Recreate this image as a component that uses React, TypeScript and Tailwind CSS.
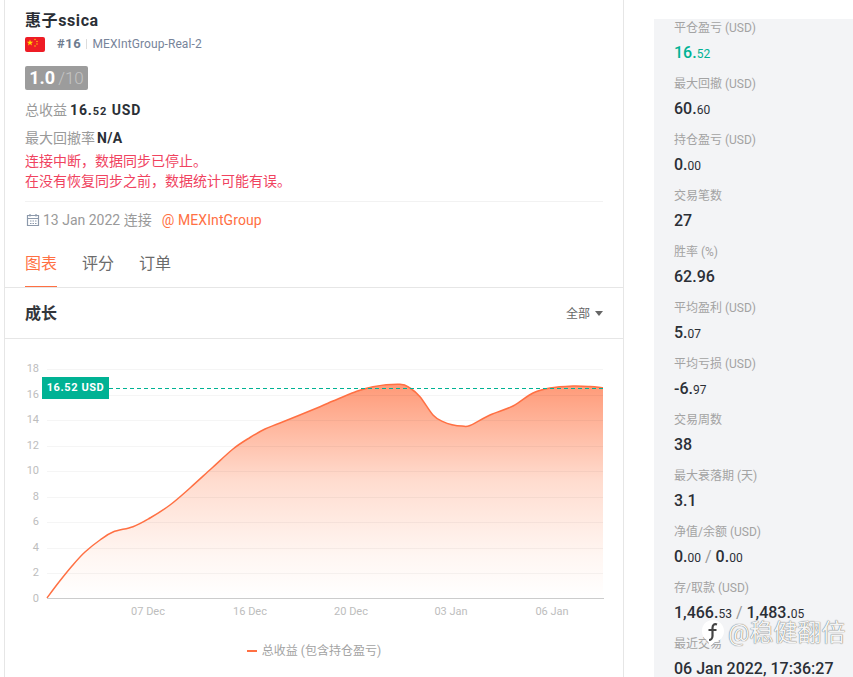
import React from "react";

const pts: [number, number][] = [
  [47,598],[59,582],[72,566],[85,552],[100,540],[113,532],[133,526.7],[150,518],[170,505],[190,488],[212,468],[233,449],[250,437.5],[265,429],[280,423],[320,406.7],[333,401],[355,392],[373,386.7],[400,384.3],[410,388],[420,396.7],[433,415],[443,421.7],[452,424.7],[462,426],[470,425.5],[490,415],[513,406],[533,393],[550,388],[573,386],[590,386.5],[603,387.7],
];
function curve(p: [number, number][]) {
  let d = `M${p[0][0]} ${p[0][1]}`;
  for (let i = 0; i < p.length - 1; i++) {
    const a = p[Math.max(i - 1, 0)], b = p[i], c = p[i + 1], e = p[Math.min(i + 2, p.length - 1)];
    d += ` C${(b[0] + (c[0] - a[0]) / 6).toFixed(1)} ${(b[1] + (c[1] - a[1]) / 6).toFixed(1)} ${(c[0] - (e[0] - b[0]) / 6).toFixed(1)} ${(c[1] - (e[1] - b[1]) / 6).toFixed(1)} ${c[0]} ${c[1]}`;
  }
  return d;
}
const line = curve(pts);
const TOP = 339;
const CJK = "font-['Roboto','Noto_Sans_CJK_SC',sans-serif]";

function Num({ i, d, green }: { i: string; d?: string; green?: boolean }) {
  return (
    <span className={green ? "text-[#00b294]" : "text-[#2b2f36]"}>
      <span className="text-[16px] font-medium">{i}</span>
      {d && <span className="text-[12px] font-normal">{d}</span>}
    </span>
  );
}

function Stat({ label, children }: { label: string; children: React.ReactNode }) {
  return (
    <div className="h-[56px] flex flex-col">
      <div className="h-[18px] leading-[18px] text-[12px] text-[#a3a3a3]">{label}</div>
      <div className="mt-[4px] h-[24px] leading-[24px] whitespace-nowrap">{children}</div>
    </div>
  );
}

export default function App() {
  return (
    <div className={`relative flex w-[853px] h-[677px] overflow-hidden bg-white ${CJK}`}>
      <div className="ml-[4px] w-[620px] h-[677px] shrink-0 border-x border-[#e6e6e6] flex flex-col">
        <div className="px-[20px] pt-[9px]">
          <div className="h-[24px] leading-[24px] text-[16px] font-bold tracking-[0.6px] text-[#2b2f36]">惠子ssica</div>
          <div className="mt-[2px] h-[18px] flex items-center">
            <svg width="20" height="15" viewBox="0 0 20 15" className="shrink-0">
              <rect width="20" height="15" rx="2" fill="#ee1c25" />
              <path d="M5 2.5l.8 2.3h2.4l-1.9 1.4.7 2.3L5 7.1 3 8.5l.7-2.3-1.9-1.4h2.4z" fill="#ffde00" />
              <circle cx="10" cy="2.5" r=".7" fill="#ffde00" />
              <circle cx="12" cy="4.5" r=".7" fill="#ffde00" />
              <circle cx="12" cy="7" r=".7" fill="#ffde00" />
              <circle cx="10" cy="9" r=".7" fill="#ffde00" />
            </svg>
            <span className="ml-[12px] text-[13px] font-bold tracking-[0.6px] text-[#6f7c8f]">#16</span>
            <span className="mx-[5px] w-px h-[10px] bg-[#dcdcdc]" />
            <span className="text-[12px] tracking-[0.1px] text-[#77849a]">MEXIntGroup-Real-2</span>
          </div>
          <div className="mt-[13px] w-[63px] h-[24px] rounded-[2px] bg-[#9c9c9c] flex items-baseline justify-center leading-[24px]">
            <span className="text-[18px] font-bold text-white">1.0</span>
            <span className="ml-[3px] text-[17px] font-light text-[#c4c4c4]">/10</span>
          </div>
          <div className="mt-[8px] h-[24px] leading-[24px] text-[14px] text-[#9a9a9a] whitespace-nowrap">
            总收益<span className="ml-[3px] font-bold text-[#2b2f36] tracking-[0.9px]">16.<span className="text-[11px]">52</span> USD</span>
          </div>
          <div className="mt-[4px] h-[24px] leading-[24px] text-[14px] text-[#9a9a9a] whitespace-nowrap">
            最大回撤率<span className="ml-[2px] font-bold text-[#2b2f36] tracking-[0.4px]">N/A</span>
          </div>
          <div className="mt-[1px] text-[14px] leading-[20px] text-[#f0435f] whitespace-nowrap">
            <div>连接中断，数据同步已停止。</div>
            <div>在没有恢复同步之前，数据统计可能有误。</div>
          </div>
          <div className="mt-[10px] h-px bg-[#f2f2f2]" />
          <div className="mt-[8px] h-[20px] flex items-center text-[14px] whitespace-nowrap">
            <svg width="14" height="14" viewBox="0 0 14 14" className="ml-[1px] shrink-0 text-[#8c99ab]">
              <path d="M1.500 2.500h11v10h-11zM1.500 5.500h11M4 1v2.500M10 1v2.500M4 8h1.500M6.500 8H8M9 8h1.500M4 10.500h1.500M6.500 10.500H8M9 10.500h1.500" fill="none" stroke="currentColor" strokeWidth="1.200" />
            </svg>
            <span className="ml-[3px] text-[#9a9a9a]">13 Jan 2022 连接</span>
            <span className="ml-[10px] tracking-[0.1px] text-[#ff7043]">@ MEXIntGroup</span>
          </div>
          <div className="mt-[22px] flex gap-[25px] text-[16px] text-[#6b6b6b]">
            <div className="h-[36px] leading-[24px] text-[#ff7043] border-b-2 border-[#ff7043]">图表</div>
            <div className="h-[36px] leading-[24px]">评分</div>
            <div className="h-[36px] leading-[24px]">订单</div>
          </div>
        </div>
        <div className="h-px bg-[#e6e6e6] -mt-px" />
        <div className="h-[51px] pt-[1px] px-[20px] flex items-center justify-between border-b border-[#e6e6e6]">
          <span className="text-[16px] font-bold text-[#33363b]">成长</span>
          <span className="flex items-center text-[12px] text-[#666]">
            全部
            <span className="ml-[5px] w-0 h-0 border-x-[4px] border-x-transparent border-t-[5px] border-t-[#666]" />
          </span>
        </div>
        <div className="relative flex-1">
          <svg width="619" height="290" viewBox={`5 ${TOP} 619 290`} className="block">
            <defs>
              <linearGradient id="g" gradientUnits="userSpaceOnUse" x1="0" y1="385" x2="0" y2="598">
                <stop offset="0" stopColor="#ff9a78" />
                <stop offset="0.45" stopColor="#ffdccf" />
                <stop offset="0.8" stopColor="#fff6f2" />
                <stop offset="1" stopColor="#ffffff" />
              </linearGradient>
            </defs>
            <path d={`${line} L603 598 L47 598 Z`} fill="url(#g)" />
            {[18,16,14,12,10,8,6,4,2].map((n) => {
              const y = Math.round(599 - (n * 230) / 18) + 0.5;
              return <line key={n} x1="47" x2="603" y1={y} y2={y} stroke="#000000" strokeOpacity="0.04" />;
            })}
            <path d={line} fill="none" stroke="#ff7043" strokeWidth="1.500" />
            <line x1="47" x2="604" y1="598.500" y2="598.500" stroke="#cccccc" />
            <line x1="109" x2="603" y1="388.500" y2="388.500" stroke="#00b294" strokeWidth="1" strokeDasharray="4 3" shapeRendering="crispEdges" />
            {[18,16,14,12,10,8,6,4,2,0].map((n) => (
              <text key={n} x="39" y={602 - (n * 230) / 18} textAnchor="end" fontSize="11" fill="#bdbdbd" fontFamily="Roboto">{n}</text>
            ))}
            {[["07 Dec",148],["16 Dec",250],["20 Dec",351],["03 Jan",451],["06 Jan",552]].map(([t,x]) => (
              <text key={t as string} x={x as number} y="615" textAnchor="middle" fontSize="11" fill="#bdbdbd" fontFamily="Roboto">{t}</text>
            ))}
          </svg>
          <div className="absolute left-[37px] top-[38px] w-[67px] h-[22px] bg-[#00b294] text-white text-[11px] font-bold tracking-[0.6px] leading-[22px] text-center">16.52 USD</div>
          <div className="absolute left-0 right-0 top-[303px] flex items-center justify-center text-[12px] leading-[18px] text-[#a3a3a3]">
            <span className="mr-[5px] w-[10px] h-[2px] bg-[#ff7043]" />
            总收益 (包含持仓盈亏)
          </div>
        </div>
      </div>
      <div className="ml-[30px] mt-[19px] flex-1 bg-[#f3f4f6] pl-[20px]">
        <Stat label="平仓盈亏 (USD)"><Num i="16." d="52" green /></Stat>
        <Stat label="最大回撤 (USD)"><Num i="60." d="60" /></Stat>
        <Stat label="持仓盈亏 (USD)"><Num i="0." d="00" /></Stat>
        <Stat label="交易笔数"><Num i="27" /></Stat>
        <Stat label="胜率 (%)"><Num i="62.96" /></Stat>
        <Stat label="平均盈利 (USD)"><Num i="5." d="07" /></Stat>
        <Stat label="平均亏损 (USD)"><Num i="-6." d="97" /></Stat>
        <Stat label="交易周数"><Num i="38" /></Stat>
        <Stat label="最大衰落期 (天)"><Num i="3.1" /></Stat>
        <Stat label="净值/余额 (USD)"><Num i="0." d="00" /> <span className="text-[16px] text-[#999]">/</span> <Num i="0." d="00" /></Stat>
        <Stat label="存/取款 (USD)"><Num i="1,466." d="53" /> <span className="text-[16px] text-[#999]">/</span> <Num i="1,483." d="05" /></Stat>
        <Stat label="最近交易"><Num i="06 Jan 2022, 17:36:27" /></Stat>
      </div>
      <div className="absolute left-[701px] top-[618px] flex items-center h-[30px]">
        <svg width="24" height="28" viewBox="0 0 24 28" className="shrink-0">
          <path d="M12 1C5 1 1 6 1 12c0 5 3 8 6 10l2 5 5-4c5-1 9-5 9-11C23 6 18 1 12 1z" fill="#ffffff" />
          <path d="M16 5.500c-2.500-1-4.500 0-4.500 3.500v8c0 2-1.500 4-3.500 4M7.500 11h8" fill="none" stroke="#444444" strokeWidth="2.200" />
        </svg>
        <span className="ml-[3px] text-[24px] leading-[30px] text-[#f4f4f4] whitespace-nowrap [text-shadow:0_0_1px_#333]">@稳健翻倍</span>
      </div>
    </div>
  );
}
